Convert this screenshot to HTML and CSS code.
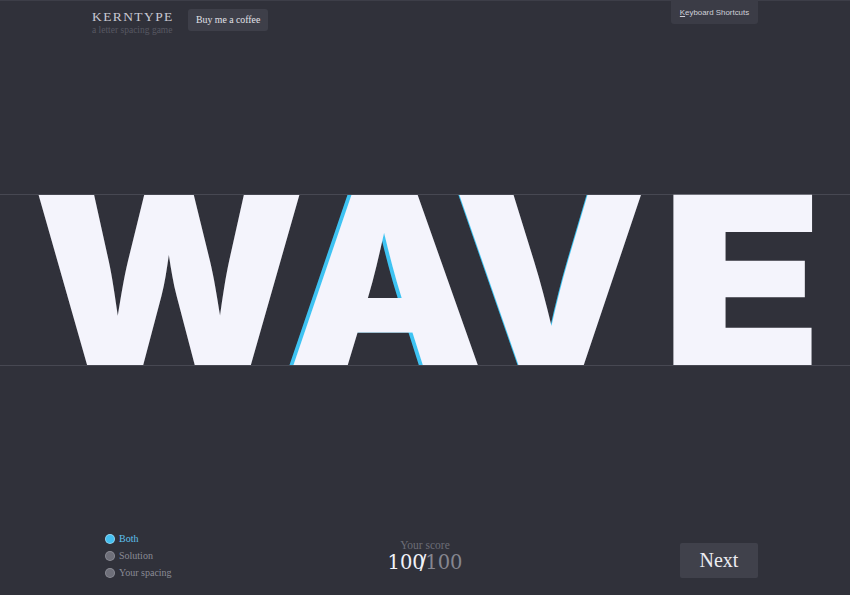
FILE: index.html
```html
<!DOCTYPE html>
<html lang="en">
<head>
<meta charset="utf-8">
<title>Kerntype</title>
<link rel="stylesheet" href="styles.css">
</head>
<body>
<div class="page">
  <header class="top">
    <div class="brand">
      <div class="logo">KERNTYPE</div>
      <div class="tagline">a letter spacing game</div>
    </div>
    <a class="coffee">Buy me a coffee</a>
    <div class="spacer"></div>
    <a class="shortcuts"><span class="u">K</span>eyboard Shortcuts</a>
  </header>

  <main class="stage">
    <div class="band">
      <div class="layer solution">
        <span class="g g-w match">W</span><span class="g g-a s-a">A</span><span class="g g-v s-v">V</span><span class="g g-e match">E</span>
      </div>
      <div class="layer yours">
        <span class="g g-w">W</span><span class="g g-a">A</span><span class="g g-v">V</span><span class="g g-e">E</span>
      </div>
    </div>
  </main>

  <footer class="controls">
    <ul class="modes">
      <li class="mode active"><span class="dot"></span>Both</li>
      <li class="mode"><span class="dot"></span>Solution</li>
      <li class="mode"><span class="dot"></span>Your spacing</li>
    </ul>
    <div class="score">
      <div class="score-label">Your score</div>
      <div class="score-value"><span class="mine">100</span><span class="slash">/</span><span class="total">100</span></div>
    </div>
    <button class="next">Next</button>
  </footer>
</div>
</body>
</html>
```
FILE: styles.css
```css
html, body {
  margin: 0;
  padding: 0;
}
body {
  background: #30313a;
  font-family: "Liberation Serif", serif;
  color: #e6e6ee;
  overflow: hidden;
}
.page {
  height: 595px;
  display: flex;
  flex-direction: column;
  border-top: 1px solid #3d3e48;
  box-sizing: border-box;
}

/* header */
.top {
  width: 666px;
  margin: 0 auto;
  display: flex;
  align-items: flex-start;
  height: 40px;
}
.brand {
  padding-top: 9px;
  width: 96px;
}
.logo {
  font-size: 13.5px;
  letter-spacing: 1.4px;
  color: #c9c9d2;
  line-height: 14px;
}
.tagline {
  font-size: 9.5px;
  color: #575862;
  line-height: 11px;
  margin-top: 1px;
}
.coffee {
  margin-top: 8px;
  height: 22px;
  line-height: 22px;
  padding: 0 8px 0 8px;
  background: #3e3f49;
  border-radius: 3px;
  font-size: 9.8px;
  color: #e2e2ea;
}
.spacer { flex: 1; }
.shortcuts {
  margin-top: -1px;
  height: 24px;
  line-height: 25px;
  width: 87px;
  text-align: center;
  background: #3b3c46;
  border-radius: 0 0 3px 3px;
  font-family: "Liberation Sans", sans-serif;
  font-size: 7.9px;
  color: #cfd0d8;
}
.u { text-decoration: underline; }

/* stage */
.stage {
  margin-top: 153px;
}
.band {
  position: relative;
  height: 170px;
  border-top: 1px solid #474852;
  border-bottom: 1px solid #474852;
}
.layer {
  position: absolute;
  inset: 0;
}
.g {
  position: absolute;
  top: -32px;
  font-family: Inter, sans-serif;
  font-weight: 900;
  font-size: 234px;
  line-height: 234px;
  transform-origin: 0 0;
}
.yours .g { color: #f4f4fc; }
.solution .g { color: #3ec3f2; }
.solution .match { opacity: 0; }
.g-w { left: 32.6px; transform: scaleX(1.074); }
.g-a { left: 288px; transform: scaleX(1.05); }
.g-v { left: 454px; transform: scaleX(1.034); }
.g-e { left: 660.6px; transform: scaleX(1.13); }
.s-a { left: 284px; }
.s-v { left: 452.5px; }

/* footer */
.controls {
  margin-top: auto;
  width: 666px;
  margin-left: auto;
  margin-right: auto;
  display: grid;
  grid-template-columns: 1fr auto 1fr;
  align-items: start;
  padding-bottom: 14px;
}
.modes {
  list-style: none;
  margin: 0;
  padding: 0 0 0 14px;
}
.mode {
  display: flex;
  align-items: center;
  height: 17px;
  font-size: 10px;
  color: #8a8b95;
}
.mode.active { color: #5ec2ee; }
.dot {
  width: 8px;
  height: 8px;
  border-radius: 50%;
  background: #6e6f79;
  box-shadow: 0 0 0 1px #8b8c95;
  margin-right: 5px;
}
.mode.active .dot {
  background: #44bff0;
  box-shadow: 0 0 0 1px #8fd6f4;
}
.score {
  text-align: center;
  padding-top: 8.5px;
}
.score-label {
  font-size: 11.5px;
  color: #6c6d77;
  line-height: 13px;
}
.score-value {
  font-family: "DejaVu Serif", serif;
  font-size: 19.5px;
  line-height: 22px;
}
.mine { color: #f2f2f8; }
.slash { color: #f2f2f8; margin: 0 -1px 0 -5px; }
.total { color: #85868f; }
.next {
  justify-self: end;
  margin-top: 13px;
  width: 78px;
  height: 35px;
  background: #40414b;
  border: none;
  border-radius: 2px;
  font-family: "Liberation Serif", serif;
  font-size: 20px;
  color: #ececf2;
  padding: 0;
}
```
